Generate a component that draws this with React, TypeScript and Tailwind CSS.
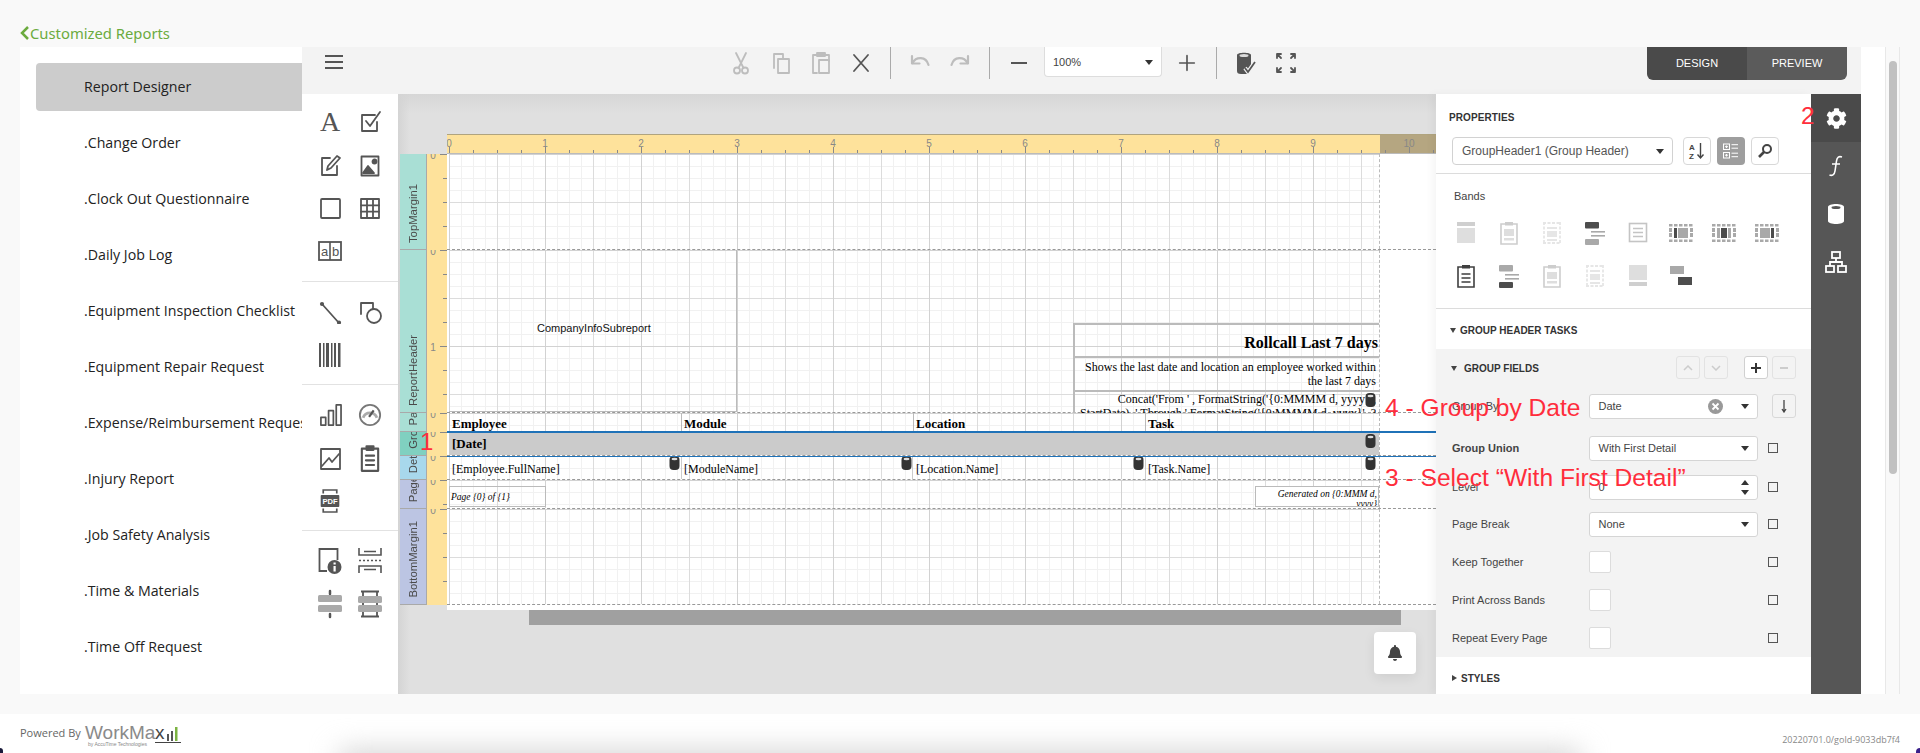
import React from "react";
import { FaBell, FaCog } from "react-icons/fa";

const serif = "[font-family:'Liberation_Serif',serif]";
const grid =
  "bg-[linear-gradient(to_right,#d2d2d2_1px,transparent_1px),linear-gradient(to_bottom,#d2d2d2_1px,transparent_1px),linear-gradient(to_right,#dcdcdc_1px,transparent_1px),linear-gradient(to_bottom,#dcdcdc_1px,transparent_1px),linear-gradient(to_right,#f1f1f1_1px,transparent_1px),linear-gradient(to_bottom,#f1f1f1_1px,transparent_1px)] bg-[size:96px_96px,96px_96px,48px_48px,48px_48px,12px_12px,12px_12px]";

const Ic = ({ s = 24, children, c = "#555" }: { s?: number; children: React.ReactNode; c?: string }) => (
  <svg width={s} height={s} viewBox="0 0 24 24" fill="none" stroke={c} strokeWidth={1.8} strokeLinecap="round" strokeLinejoin="round">
    {children}
  </svg>
);

const menu = [
  "Report Designer",
  ".Change Order",
  ".Clock Out Questionnaire",
  ".Daily Job Log",
  ".Equipment Inspection Checklist",
  ".Equipment Repair Request",
  ".Expense/Reimbursement Request",
  ".Injury Report",
  ".Job Safety Analysis",
  ".Time & Materials",
  ".Time Off Request",
];

function Sidebar() {
  return (
    <div className="w-[282px] shrink-0 bg-white pl-4 pt-4">
      {menu.map((m, i) => (
        <div
          key={m}
          className={`h-12 mb-2 flex items-center pl-12 pb-px text-[14.2px] text-[#222] whitespace-nowrap overflow-hidden [font-family:'Open_Sans',sans-serif] ${
            i === 0 ? "bg-[#cccccc] rounded-l" : ""
          }`}
        >
          {m}
        </div>
      ))}
    </div>
  );
}

const TBtn = ({ children }: { children: React.ReactNode }) => (
  <div className="w-10 h-8 flex items-center justify-center shrink-0">{children}</div>
);
const TSep = () => <div className="w-px h-8 bg-[#aaa] shrink-0 mx-[9px]" />;

function Toolbar() {
  const off = "#bdbdbd";
  return (
    <div className="h-[47px] shrink-0 bg-[#f3f3f3] flex items-start">
      <div className="w-[18px] ml-[23px] mt-2 h-[14px] flex flex-col justify-between shrink-0">
        <div className="h-[2px] bg-[#555]" />
        <div className="h-[2px] bg-[#555]" />
        <div className="h-[2px] bg-[#555]" />
      </div>
      <div className="ml-[378px] flex items-start">
        <TBtn>
          <Ic c={off}>
            <circle cx="8" cy="19.5" r="3" />
            <circle cx="16" cy="19.5" r="3" />
            <path d="M9.5 17 17 2M14.5 17 7 2" />
          </Ic>
        </TBtn>
        <TBtn>
          <Ic c={off}>
            <rect x="9" y="8" width="11" height="14" />
            <path d="M9 3H5v14" />
            <path d="M9 3h5v4" />
          </Ic>
        </TBtn>
        <TBtn>
          <Ic c={off}>
            <path d="M8 4H4v18h4M16 4h4v6" />
            <rect x="8" y="2" width="8" height="3" fill={off} />
            <rect x="10" y="9" width="10" height="13" />
          </Ic>
        </TBtn>
        <TBtn>
          <Ic>
            <path d="m5 4 14 16M19 4 5 20" />
          </Ic>
        </TBtn>
        <TSep />
        <TBtn>
          <Ic c={off}>
            <path d="M4 5v7.500h7.500" strokeWidth={2.2} />
            <path d="M4.500 12C8 5.500 18 5 20.500 14" strokeWidth={2.2} />
          </Ic>
        </TBtn>
        <TBtn>
          <Ic c={off}>
            <path d="M20 5v7.500h-7.500" strokeWidth={2.2} />
            <path d="M19.500 12C16 5.500 6 5 3.500 14" strokeWidth={2.2} />
          </Ic>
        </TBtn>
        <TSep />
        <TBtn>
          <div className="w-4 h-[2.5px] bg-[#555]" />
        </TBtn>
        <div className="w-[118px] h-[30px] ml-[5px] mr-[5px] bg-white border border-[#ddd] border-t-0 rounded-b flex items-center justify-between pl-2 pr-[6px] pt-[2px] text-[11px] text-[#444] shrink-0">
          <span>100%</span>
          <div className="w-0 h-0 border-x-[4px] border-x-transparent border-t-[5px] border-t-[#333] mr-[2px]" />
        </div>
        <TBtn>
          <Ic s={22}>
            <path d="M12 4v16M4 12h16" />
          </Ic>
        </TBtn>
        <TSep />
        <TBtn>
          <svg width="26" height="26" viewBox="0 0 26 26">
            <path d="M4 5c0-3 14-3 14 0v14l-4 5H8c-3 0-4-1-4-3z" fill="#555" />
            <ellipse cx="11" cy="5.500" rx="4.500" ry="1.500" fill="#ddd" />
            <path d="m12 18 3 4 7-10" fill="none" stroke="#f3f3f3" strokeWidth="4" />
            <path d="m12 18 3 4 7-10" fill="none" stroke="#555" strokeWidth="1.8" />
          </svg>
        </TBtn>
        <TBtn>
          <Ic s={24}>
            <path d="M3 3h4M3 3v4M3 3l4 4M21 3h-4M21 3v4M21 3l-4 4M3 21h4M3 21v-4M3 21l4-4M21 21h-4M21 21v-4M21 21l-4-4" strokeWidth={1.8} />
          </Ic>
        </TBtn>
      </div>
      <div className="ml-auto mr-[14px] w-[200px] h-[33px] rounded-b-md overflow-hidden flex text-[11px] text-white shrink-0">
        <div className="w-[100px] bg-[#4a4a4a] flex items-center justify-center">DESIGN</div>
        <div className="w-[100px] bg-[#5b5b5b] flex items-center justify-center">PREVIEW</div>
      </div>
    </div>
  );
}

const TI = ({ children }: { children?: React.ReactNode }) => (
  <div className="w-10 h-[43px] flex items-center justify-center">{children}</div>
);

function Toolbox() {
  const g = "grid grid-cols-[40px_40px] content-start pl-2 border-b border-[#e2e2e2]";
  return (
    <div className="w-24 shrink-0 bg-white">
      <div className={`${g} pt-[6px] h-[188px]`}>
        <TI>
          <span className={`${serif} text-[28px] leading-none text-[#555]`}>A</span>
        </TI>
        <TI>
          <Ic s={24}>
            <path d="M19 12v9H4V5h13" />
            <path d="m8 11 4 5L22 2" />
          </Ic>
        </TI>
        <TI>
          <Ic s={24}>
            <path d="M12 5H4v17h15v-9" />
            <path d="M9 17l1-4L19 3l3 2-9 10z" />
          </Ic>
        </TI>
        <TI>
          <Ic s={24}>
            <rect x="3.5" y="3.5" width="17" height="19" />
            <path d="M5 20l5-7 6 7z" fill="#555" />
            <circle cx="16.5" cy="8.5" r="2" fill="#555" />
          </Ic>
        </TI>
        <TI>
          <Ic s={24}>
            <rect x="3" y="3" width="19" height="19" rx="1" />
          </Ic>
        </TI>
        <TI>
          <Ic s={24}>
            <rect x="3" y="3" width="18" height="19" />
            <path d="M9 3v19M15 3v19M3 9.3h18M3 15.6h18" />
          </Ic>
        </TI>
        <TI>
          <svg width="26" height="26" viewBox="0 0 26 26">
            <rect x="2" y="4" width="22" height="18" fill="none" stroke="#555" strokeWidth="1.8" />
            <path d="M13 4v18" stroke="#555" strokeWidth="1.6" />
            <text x="7.5" y="18" fontSize="13" textAnchor="middle" fill="#555" fontFamily="Liberation Sans">a</text>
            <text x="18.5" y="18" fontSize="13" textAnchor="middle" fill="#555" fontFamily="Liberation Sans">b</text>
          </svg>
        </TI>
      </div>
      <div className={`${g} pt-2 h-[103px]`}>
        <TI>
          <Ic s={24}>
            <path d="m4 4 17 19" />
            <circle cx="4" cy="4" r="1.2" fill="#555" />
            <circle cx="21" cy="22.5" r="1.2" fill="#555" />
          </Ic>
        </TI>
        <TI>
          <Ic s={24}>
            <path d="M3 14V3h12v6" />
            <circle cx="16" cy="16" r="7" />
          </Ic>
        </TI>
        <TI>
          <svg width="24" height="26" viewBox="0 0 24 26" fill="#555">
            <rect x="1" y="1" width="2" height="24" />
            <rect x="5" y="1" width="1.5" height="24" />
            <rect x="8" y="1" width="3" height="24" />
            <rect x="13" y="1" width="1.5" height="24" />
            <rect x="16" y="1" width="2" height="24" />
            <rect x="20" y="1" width="2.5" height="24" />
          </svg>
        </TI>
      </div>
      <div className={`${g} pt-2 h-[146px]`}>
        <TI>
          <Ic s={23}>
            <rect x="2" y="15" width="5" height="8" />
            <rect x="10" y="8" width="5" height="15" />
            <rect x="18" y="2" width="5" height="21" />
          </Ic>
        </TI>
        <TI>
          <svg width="24" height="24" viewBox="0 0 26 26" fill="none" stroke="#777">
            <circle cx="13" cy="13" r="11" strokeWidth="2" />
            <path d="M5.500 16a8 8 0 0 1 15 0" strokeWidth="3" stroke="#aaa" />
            <path d="m12 15 5-7" strokeWidth="2.4" stroke="#555" />
          </svg>
        </TI>
        <TI>
          <Ic s={24}>
            <rect x="3" y="3" width="19" height="20" />
            <path d="m4 20 7-8 3 4 7-8" />
          </Ic>
        </TI>
        <TI>
          <Ic s={28}>
            <path d="M8 4H5v19h14V4h-3" />
            <rect x="9" y="2" width="6" height="3" fill="#555" />
            <path d="M8.500 10h7M8.500 14h7M8.500 18h7" />
          </Ic>
        </TI>
        <TI>
          <svg width="22" height="26" viewBox="0 0 26 30">
            <path d="M5 6V2h16v4M5 24v4h16v-4" fill="none" stroke="#555" strokeWidth="2" />
            <rect x="2" y="8" width="22" height="14" rx="1" fill="#555" />
            <text x="13" y="18.500" fontSize="9" fontWeight="700" textAnchor="middle" fill="#fff" fontFamily="Liberation Sans">PDF</text>
          </svg>
        </TI>
      </div>
      <div className="grid grid-cols-[40px_40px] content-start pl-2 pt-2">
        <TI>
          <svg width="26" height="28" viewBox="0 0 26 28">
            <path d="M10 24H2.500V2h18v11" fill="none" stroke="#555" strokeWidth="1.8" />
            <circle cx="17.500" cy="20" r="7" fill="#555" />
            <rect x="16.500" y="19" width="2.200" height="5.500" fill="#fff" />
            <rect x="16.500" y="15.500" width="2.200" height="2" fill="#fff" />
          </svg>
        </TI>
        <TI>
          <svg width="24" height="27" viewBox="0 0 24 27" fill="none" stroke="#555" strokeWidth="1.6">
            <path d="M1 1v7h22V1M6 4.500h12M1 26v-7h22v7M6 22.500h12" />
            <path d="M1 13.500h22" strokeDasharray="2 2" />
          </svg>
        </TI>
        <TI>
          <svg width="26" height="30" viewBox="0 0 26 30">
            <path d="M13 2v3M13 25v3" stroke="#555" strokeWidth="2.500" strokeLinecap="round" />
            <rect x="1" y="6" width="24" height="7" rx="1.500" fill="#aaa" />
            <rect x="1" y="16" width="24" height="7" rx="1.500" fill="#aaa" />
          </svg>
        </TI>
        <TI>
          <svg width="26" height="30" viewBox="0 0 26 30">
            <path d="M6 2v26M20 2v26M4 2.500h18M4 27.500h18" stroke="#555" strokeWidth="1.800" />
            <rect x="1" y="7" width="24" height="7" rx="1.500" fill="#aaa" />
            <rect x="1" y="16" width="24" height="7" rx="1.500" fill="#aaa" />
          </svg>
        </TI>
      </div>
    </div>
  );
}

function TopRuler() {
  const ticks = Array.from({ length: 42 }, (_, i) => i * 24 + 2);
  return (
    <svg width="989" height="20" className="block">
      <rect width="933" height="20" fill="#fee29b" />
      <rect x="933" width="56" height="20" fill="#b5a681" />
      <rect width="989" height="1" fill="#b0a47f" />
      <rect y="19" width="989" height="1" fill="#bbb" />
      {ticks.map((x, i) => (
        <rect key={x} x={x} y={i % 4 === 0 ? 13 : 16} width="1" height={i % 4 === 0 ? 6 : 3} fill="#888" />
      ))}
      {Array.from({ length: 11 }, (_, i) => (
        <text key={i} x={i * 96 + 2} y="12.500" fontSize="10" fill="#888" textAnchor="middle" fontFamily="Liberation Sans">
          {i}
        </text>
      ))}
    </svg>
  );
}

const Db = ({ cls }: { cls: string }) => (
  <svg width="11" height="14" viewBox="0 0 11 14" className={`absolute ${cls}`}>
    <rect x="0.500" y="0" width="10" height="14" rx="4" fill="#333" />
    <ellipse cx="5.500" cy="3" rx="3" ry="1.200" fill="#ddd" />
  </svg>
);

function Band({
  h,
  label,
  color,
  children,
  selected,
}: {
  h: number;
  label: string;
  color: string;
  children?: React.ReactNode;
  selected?: boolean;
}) {
  const ticks = [];
  for (let y = 0; y < h; y += 24) ticks.push(y);
  return (
    <div className={`flex relative ${selected ? "z-[1]" : ""}`} style={{ height: h }}>
      <div className={`w-[27px] ml-[2px] shrink-0 relative overflow-hidden border-b border-r border-[#a9a9a9] ${color}`}>
        <span className="absolute bottom-[6px] left-[6px] text-[11.3px] leading-[14px] text-[#4a4a4a] whitespace-nowrap [writing-mode:vertical-rl] rotate-180">
          {label}
        </span>
      </div>
      <svg width="20" height={h} className="shrink-0 block bg-[#fee29b] overflow-hidden">
        {ticks.map((y, i) => (
          <rect key={y} x={i % 4 === 0 ? 13 : 16} y={y} width={i % 4 === 0 ? 7 : 4} height="1" fill="#888" />
        ))}
        {ticks
          .filter((_, i) => i % 4 === 0)
          .map((y, i) => (
            <text key={y} x="6" y={y + 5} fontSize="10" fill="#888" textAnchor="middle" fontFamily="Liberation Sans">
              {i === 0 ? "0" : i}
            </text>
          ))}
      </svg>
      <div className="flex-1 bg-white border-b border-dashed border-[#999]">
        <div className={`relative ml-[2px] w-[931px] h-full border-r border-dashed border-[#bbb] ${grid}`}>{children}</div>
      </div>
      {selected && (
        <>
          <div className="absolute left-[49px] right-0 -top-px h-[1.500px] bg-[#1f72b8]" />
          <div className="absolute left-[49px] right-0 -bottom-px h-[1.500px] bg-[#1f72b8]" />
        </>
      )}
    </div>
  );
}

const Head = ({ left, children }: { left: string; children: string }) => (
  <div className={`absolute top-0 h-full border-l border-[#bbb] pl-[2px] ${left} ${serif} text-[13px] font-bold text-black leading-[19px] pt-[1px]`}>
    {children}
  </div>
);
const Cell = ({ left, children }: { left: string; children: string }) => (
  <div className={`absolute top-0 h-full ${left} ${serif} text-[12px] text-black leading-[27px] pl-[3px] whitespace-nowrap`}>{children}</div>
);

function Surface() {
  return (
    <div className="w-[1038px] shrink-0 relative bg-[#e0e0e0] bg-[linear-gradient(to_bottom,#d6d6d6,#e0e0e0_20px)] pt-10">
      <div className="absolute left-0 top-0 bottom-0 w-3 bg-gradient-to-r from-[#d4d4d4] to-transparent" />
      <div className="ml-[49px] relative">
        <TopRuler />
      </div>
      <Band h={96} label="TopMargin1" color="bg-[#a9dfd5]" />
      <Band h={163} label="ReportHeader" color="bg-[#a9dfd5]">
        <div className="absolute left-0 top-0 w-[288px] h-full border-r border-b border-[#bbb]">
          <div className="absolute left-[88px] top-[70px] text-[11px] text-[#111] whitespace-nowrap">CompanyInfoSubreport</div>
        </div>
        <div className={`absolute left-[624px] top-[73px] w-[306px] ${serif} text-right text-black`}>
          <div className="h-[33px] border-2 border-[#bbb] border-r-0 border-b-0 pt-[8px] pr-[1px] text-[16px] font-bold leading-[20px] whitespace-nowrap">Rollcall Last 7 days</div>
          <div className="h-[34px] border-l-2 border-t-2 border-[#bbb] text-[12px] leading-[14px] pr-[3px] pt-[2px]">
            <div className="whitespace-nowrap">Shows the last date and location an employee worked within</div>
            <div>the last 7 days</div>
          </div>
          <div className="h-[23px] overflow-hidden border-l-2 border-t-2 border-[#bbb] text-[12px] leading-[14px] pr-[3px]">
            <div className="whitespace-nowrap">Concat('From ' , FormatString('{"{"}0:MMMM d, yyyy{"}"}',</div>
            <div className="whitespace-nowrap">StartDate) ,' Through ',FormatString('{"{"}0:MMMM d, yyyy{"}"}', ?</div>
          </div>
        </div>
        <Db cls="left-[916px] top-[143px]" />
      </Band>
      <Band h={19} label="PageHeader" color="bg-[#a9dfd5]">
        <Head left="left-0">Employee</Head>
        <Head left="left-[232px]">Module</Head>
        <Head left="left-[464px]">Location</Head>
        <Head left="left-[696px]">Task</Head>
      </Band>
      <Band h={24} label="GroupHeader1" color="bg-[#80d0c0]" selected>
        <div className={`absolute inset-x-0 top-0 h-full bg-[#cbcbcb] ${serif} text-[13px] font-bold text-black leading-[24px] pl-[3px]`}>[Date]</div>
        <Db cls="left-[916px] top-[2px]" />
      </Band>
      <Band h={24} label="Detail1" color="bg-[#a8d8ec]">
        <Cell left="left-0">[Employee.FullName]</Cell>
        <Cell left="left-[232px]">[ModuleName]</Cell>
        <Cell left="left-[464px]">[Location.Name]</Cell>
        <Cell left="left-[696px]">[Task.Name]</Cell>
        <div className="absolute left-[232px] top-0 h-full w-px bg-[#ccc]" />
        <div className="absolute left-[463px] top-0 h-full w-px bg-[#ccc]" />
        <div className="absolute left-[696px] top-0 h-full w-px bg-[#ccc]" />
        <Db cls="left-[220px] top-0" />
        <Db cls="left-[452px] top-0" />
        <Db cls="left-[684px] top-0" />
        <Db cls="left-[916px] top-0" />
      </Band>
      <Band h={29} label="PageFooter1" color="bg-[#bcc5e3]">
        <div className={`absolute left-0 top-[6px] w-[97px] h-[21px] border border-[#bbb] ${serif} italic text-[9.500px] text-black leading-[20px] pl-[1px]`}>
          Page {"{0}"} of {"{1}"}
        </div>
        <div className={`absolute left-[806px] top-[6px] w-[124px] h-[21px] border border-[#bbb] ${serif} italic text-[9.500px] text-black leading-[10px] text-right pr-[1px] pt-[2px] bg-white overflow-hidden`}>
          Generated on {"{0:MMM d,"}
          <br />
          {"yyyy}"}
        </div>
      </Band>
      <Band h={96} label="BottomMargin1" color="bg-[#bcc5e3]" />
      <div className="ml-[49px] h-[5px] bg-white" />
      <div className="ml-[131px] w-[872px] h-[15px] bg-[#a0a0a0]" />
      <div className="absolute left-[976px] top-[538px] w-[42px] h-[42px] bg-white rounded flex items-center justify-center shadow-[0_4px_12px_rgba(0,0,0,0.08)]">
        <FaBell size={16} color="#444" />
      </div>
    </div>
  );
}

const D = "#4d4d4d";
const L = "#dedede";
const M = "#a9a9a9";
const Clip = ({ c, lines, fill }: { c: string; lines?: boolean; fill?: string }) => (
  <svg width="20" height="24" viewBox="0 0 20 24" fill="none">
    <path d="M6 3H2v20h16V3h-4" stroke={c} strokeWidth="1.600" />
    <rect x="6" y="1" width="8" height="3.500" fill={c} />
    {lines && <path d="M5.500 10h9M5.500 14h9M5.500 18h9" stroke={c} strokeWidth="1.600" />}
    {fill && <rect x="5" y="8" width="10" height="7" fill={fill} />}
    {fill && <rect x="5" y="17" width="10" height="2.500" fill={fill} />}
  </svg>
);
const DashBox = ({ c }: { c: string }) => (
  <svg width="20" height="24" viewBox="0 0 20 24" fill="none">
    <path d="M2 1v22M18 1v22M1 2h18M1 22h18" stroke={c} strokeWidth="1.800" strokeDasharray="3 1.500" />
    <rect x="5" y="6" width="10" height="2" fill={c} />
    <rect x="5" y="10" width="10" height="6" fill={c} />
    <rect x="5" y="18" width="10" height="2" fill={c} />
  </svg>
);
const Wide = ({ v }: { v: number }) => (
  <svg width="24" height="18" viewBox="0 0 24 18">
    <path d="M0 1.200h24M0 16.800h24" stroke={M} strokeWidth="2.400" strokeDasharray="3.500 1.500" fill="none" />
    <path d="M1.500 4v10M22.500 4v10" stroke={M} strokeWidth="3" strokeDasharray="4 1" fill="none" />
    {v === 0 && (
      <>
        <rect x="5" y="4" width="3" height="10" fill={D} />
        <rect x="9" y="4" width="10" height="10" fill={M} />
      </>
    )}
    {v === 1 && (
      <>
        <rect x="5" y="4" width="3" height="10" fill={M} />
        <rect x="9" y="4" width="6" height="10" fill={D} />
        <rect x="16" y="4" width="3" height="10" fill={M} />
      </>
    )}
    {v === 2 && (
      <>
        <rect x="5" y="4" width="10" height="10" fill={M} />
        <rect x="16" y="4" width="3" height="10" fill={D} />
      </>
    )}
  </svg>
);
const Tree = ({ a, b }: { a: string; b: string }) => (
  <svg width="22" height="24" viewBox="0 0 22 24">
    <rect x="1" y="1" width="14" height="6.500" rx="1" fill={a} />
    <rect x="7" y="10" width="14" height="1.600" fill={M} />
    <rect x="7" y="14" width="14" height="1.600" fill={M} />
    <rect x="1" y="18" width="14" height="6" rx="1" fill={b} />
  </svg>
);

const bandIcons: React.ReactNode[] = [
  <svg width="20" height="22" viewBox="0 0 20 22"><rect x="1" y="0" width="18" height="4" fill="#cfcfcf" /><rect x="1" y="6" width="18" height="15" fill={L} /></svg>,
  <Clip c="#cdcdcd" fill={L} />,
  <DashBox c="#e6e6e6" />,
  <Tree a={D} b={M} />,
  <svg width="20" height="22" viewBox="0 0 20 22" fill="none"><rect x="1.500" y="1.500" width="17" height="18" stroke="#c4c4c4" strokeWidth="1.600" /><path d="M5 6.500h10M5 10.500h10M5 14.500h10" stroke="#c4c4c4" strokeWidth="1.600" /></svg>,
  <Wide v={0} />,
  <Wide v={1} />,
  <Wide v={2} />,
  <Clip c="#3f3f3f" lines />,
  <Tree a={M} b={D} />,
  <Clip c="#cdcdcd" fill={L} />,
  <DashBox c="#e6e6e6" />,
  <svg width="20" height="22" viewBox="0 0 20 22"><rect x="1" y="0" width="18" height="15" fill={L} /><rect x="1" y="17" width="18" height="4" fill="#cfcfcf" /></svg>,
  <svg width="24" height="20" viewBox="0 0 24 20"><rect x="1" y="0" width="14" height="8" fill={M} /><rect x="9" y="11" width="14" height="8" fill={D} /></svg>,
];

const Caret = () => <div className="w-0 h-0 border-x-[4px] border-x-transparent border-t-[5px] border-t-[#333]" />;
const Sq = () => <div className="w-[10px] h-[10px] border border-[#555] ml-[10px] shrink-0 bg-[#f3f3f3]" />;
const Inp = ({ children }: { children: React.ReactNode }) => (
  <div className="w-[169px] h-[25px] bg-white border border-[#d5d5d5] rounded-[3px] flex items-center justify-between pl-[9px] pr-2 text-[11px] text-[#444] shrink-0">
    {children}
  </div>
);
const Row = ({ label, h = "h-[38px]", bold, children }: { label: string; h?: string; bold?: boolean; children: React.ReactNode }) => (
  <div className={`${h} flex items-center pl-4`}>
    <div className={`w-[136.500px] text-[11px] shrink-0 text-[#444] ${bold ? "font-bold" : ""}`}>{label}</div>
    {children}
  </div>
);
const Check = () => <div className="w-[22px] h-[22px] bg-white border border-[#dcdcdc] rounded-[2px] mr-[147px] shrink-0" />;
const SmallBtn = ({ children, cls }: { children: React.ReactNode; cls?: string }) => (
  <div className={`w-[24px] h-[23px] rounded-[3px] border flex items-center justify-center ${cls}`}>{children}</div>
);
const Tri = ({ down }: { down?: boolean }) =>
  down ? (
    <div className="w-0 h-0 border-x-[3.500px] border-x-transparent border-t-[5px] border-t-[#444] shrink-0" />
  ) : (
    <div className="w-0 h-0 border-y-[3.500px] border-y-transparent border-l-[5px] border-l-[#444] shrink-0" />
  );

function Props() {
  return (
    <div className="w-[375px] shrink-0 bg-white overflow-hidden text-[#333] shadow-[-4px_0_8px_rgba(0,0,0,0.04)] z-10">
      <div className="h-[43px] pl-[13px] pt-[18px] text-[10px] font-bold leading-[12px] tracking-[0.1px]">PROPERTIES</div>
      <div className="h-[37px] border-b border-[#dcdcdc] flex items-start pl-4">
        <div className="w-[221px] h-7 border border-[#d2d2d2] rounded flex items-center justify-between pl-[9px] pr-[8px] text-[12px] text-[#555] shrink-0 whitespace-nowrap">
          <span>GroupHeader1 (Group Header)</span>
          <Caret />
        </div>
        <div className="w-[28px] h-7 ml-[10px] border border-[#d8d8d8] rounded flex items-center justify-center shrink-0">
          <svg width="18" height="18" viewBox="0 0 18 18">
            <text x="1" y="8" fontSize="8" fontWeight="700" fill="#444" fontFamily="Liberation Sans">A</text>
            <text x="1" y="16.500" fontSize="8" fontWeight="700" fill="#444" fontFamily="Liberation Sans">Z</text>
            <path d="M12.500 1v15M9.500 12.500l3 3.500 3-3.500" fill="none" stroke="#444" strokeWidth="1.400" />
          </svg>
        </div>
        <div className="w-[28px] h-7 ml-[6px] bg-[#9e9e9e] rounded flex items-center justify-center shrink-0">
          <svg width="16" height="16" viewBox="0 0 16 16" fill="none" stroke="#fff" strokeWidth="1">
            <rect x="0.500" y="1" width="6" height="5.500" />
            <rect x="0.500" y="9.500" width="6" height="5.500" />
            <path d="M2 3.700h3M3.500 2.500v2.500M2 12.200h3M3.500 11v2.500M8.500 1.700H15M8.500 5.200H15M8.500 10.200H15M8.500 13.700H15" />
          </svg>
        </div>
        <div className="w-[28px] h-7 ml-[6px] border border-[#d8d8d8] rounded flex items-center justify-center shrink-0">
          <svg width="16" height="16" viewBox="0 0 16 16" fill="none" stroke="#444">
            <circle cx="10" cy="6" r="4" strokeWidth="2" />
            <path d="m7 9-5 5" strokeWidth="2.600" />
          </svg>
        </div>
      </div>
      <div className="h-[135px] border-b border-[#dcdcdc]">
        <div className="h-[37px] pl-[18px] pt-[15px] text-[11px] leading-[14px] text-[#444]">Bands</div>
        <div className="grid grid-cols-[repeat(8,43px)] grid-rows-[43px_43px] pl-[8.500px]">
          {bandIcons.map((ic, i) => (
            <div key={i} className="flex items-center justify-center">
              {ic}
            </div>
          ))}
        </div>
      </div>
      <div className="h-[40px] flex items-center pl-[14px] pt-[2px] gap-[4px] text-[10px] font-bold">
        <Tri down />
        <span>GROUP HEADER TASKS</span>
      </div>
      <div className="bg-[#f3f3f3] h-[308px]">
        <div className="h-[36px] flex items-start pl-[15px] pt-[7px]">
          <div className="flex items-center gap-[7px] h-[23px] pt-[1px] text-[10px] font-bold w-[225px]">
            <Tri down />
            <span>GROUP FIELDS</span>
          </div>
          <SmallBtn cls="border-[#e2e2e2]">
            <svg width="10" height="6" viewBox="0 0 10 6" fill="none" stroke="#ccc" strokeWidth="1.500"><path d="m1 5 4-4 4 4" /></svg>
          </SmallBtn>
          <div className="ml-[4px]">
            <SmallBtn cls="border-[#e2e2e2]">
              <svg width="10" height="6" viewBox="0 0 10 6" fill="none" stroke="#ccc" strokeWidth="1.500"><path d="m1 1 4 4 4-4" /></svg>
            </SmallBtn>
          </div>
          <div className="ml-[16px]">
            <SmallBtn cls="border-[#d0d0d0] bg-white">
              <svg width="12" height="12" viewBox="0 0 12 12" stroke="#333" strokeWidth="2"><path d="M6 1v10M1 6h10" /></svg>
            </SmallBtn>
          </div>
          <div className="ml-[4px]">
            <SmallBtn cls="border-[#e2e2e2]">
              <div className="w-[8px] h-[2px] bg-[#ccc]" />
            </SmallBtn>
          </div>
        </div>
        <Row label="Group By" h="h-[42px]">
          <Inp>
            <span>Date</span>
            <span className="flex items-center gap-[18px]">
              <svg width="15" height="15" viewBox="0 0 15 15">
                <circle cx="7.500" cy="7.500" r="7.500" fill="#999" />
                <path d="m4.500 4.500 6 6M10.500 4.500l-6 6" stroke="#fff" strokeWidth="1.800" />
              </svg>
              <Caret />
            </span>
          </Inp>
          <div className="w-[24px] h-[24px] ml-[14.500px] border border-[#d8d8d8] rounded-[3px] flex items-center justify-center shrink-0">
            <svg width="8" height="14" viewBox="0 0 8 14" fill="none" stroke="#444" strokeWidth="1.300"><path d="M4 1v11M2 10l2 3 2-3" /></svg>
          </div>
        </Row>
        <Row label="Group Union" h="h-[42px]" bold>
          <Inp>
            <span>With First Detail</span>
            <Caret />
          </Inp>
          <Sq />
        </Row>
        <Row label="Level" h="h-[36px]">
          <Inp>
            <span>0</span>
            <span className="flex flex-col gap-[5px]">
              <div className="w-0 h-0 border-x-[4px] border-x-transparent border-b-[5px] border-b-[#333]" />
              <Caret />
            </span>
          </Inp>
          <Sq />
        </Row>
        <Row label="Page Break">
          <Inp>
            <span>None</span>
            <Caret />
          </Inp>
          <Sq />
        </Row>
        <Row label="Keep Together">
          <Check />
          <Sq />
        </Row>
        <Row label="Print Across Bands">
          <Check />
          <Sq />
        </Row>
        <Row label="Repeat Every Page">
          <Check />
          <Sq />
        </Row>
      </div>
      <div className="h-[36px] flex items-center pl-4 pt-[6px] gap-[4px] text-[10px] font-bold">
        <Tri />
        <span>STYLES</span>
      </div>
    </div>
  );
}

function Tabs() {
  return (
    <div className="w-[50px] shrink-0 bg-[#565656] flex flex-col">
      <div className="h-12 bg-[#4a4a4a] flex items-center justify-center">
        <FaCog size={21} color="#fff" />
      </div>
      <div className="h-[47px] flex items-center justify-center">
        <svg width="16" height="22" viewBox="0 0 16 22" fill="none" stroke="#fff" strokeWidth="1.600">
          <path d="M14 2c-3-1-5 0-5.500 4L7 16c-.5 4-3 5-5.500 4M4 9h8" />
        </svg>
      </div>
      <div className="h-[49px] flex items-center justify-center">
        <svg width="16" height="20" viewBox="0 0 16 20">
          <path d="M0 3c0-4 16-4 16 0v14c0 4-16 4-16 0z" fill="#fff" />
          <ellipse cx="8" cy="3.500" rx="4.500" ry="1.500" fill="#555" />
        </svg>
      </div>
      <div className="h-[48px] flex items-center justify-center">
        <svg width="22" height="22" viewBox="0 0 22 22" fill="none" stroke="#fff" strokeWidth="1.800">
          <rect x="7" y="1" width="8" height="6" />
          <rect x="1" y="15" width="8" height="6" />
          <rect x="13" y="15" width="8" height="6" />
          <path d="M11 7v4M5 15v-4h12v4" />
        </svg>
      </div>
    </div>
  );
}

export default function App() {
  return (
    <div className="relative w-[1920px] h-[753px] overflow-hidden bg-[#f9f9f9] flex flex-col [font-family:'Liberation_Sans',sans-serif]">
      <div className="h-[47px] shrink-0 pl-5 pt-[22px] flex items-start text-[#6bab3e] text-[14.800px] leading-[22px] [font-family:'Noto_Sans',sans-serif]">
        <svg width="10" height="14" viewBox="0 0 10 14" className="mt-1" fill="none" stroke="#6bab3e" strokeWidth="2.500">
          <path d="M8 1 2 7l6 6" />
        </svg>
        <span>Customized Reports</span>
      </div>

      <div className="h-[647px] shrink-0 ml-5 flex">
        <Sidebar />
        <div className="w-[1559px] shrink-0 flex flex-col overflow-hidden">
          <Toolbar />
          <div className="flex flex-1 min-h-0">
            <Toolbox />
            <Surface />
            <Props />
            <Tabs />
          </div>
        </div>
        <div className="w-6 shrink-0 bg-white" />
        <div className="w-[15px] shrink-0 border-x border-[#e8e8e8] pl-[3px] pt-[14px]">
          <div className="w-2 h-[413px] rounded-full bg-[#c1c1c1]" />
        </div>
      </div>

      <div className="h-5 shrink-0" />

      <div className="relative h-[39px] shrink-0 bg-white flex items-start justify-between overflow-hidden">
        <div className="absolute left-[340px] right-[340px] -bottom-[22px] h-[24px] bg-[#cfcfcf] blur-[14px]" />
        <div className="relative flex items-start pl-5">
          <span className="text-[11px] text-[#666] mt-[11px] w-[65px] whitespace-nowrap [font-family:'Open_Sans',sans-serif]">Powered By</span>
          <div className="relative flex items-start h-[24px] mt-[7px]">
            <span className="text-[19px] leading-[24px] text-[#8a8a8a] whitespace-nowrap w-[70px]">WorkMa</span>
            <span className="text-[19px] leading-[24px] h-[22px] w-[26px] text-[#444] border-b-[1.500px] border-[#444] flex items-start">
              <span className="w-[11px]">x</span>
              <svg width="14" height="14" viewBox="0 0 14 14" className="mt-[6px]">
                <rect x="1" y="7" width="2" height="7" fill="#555" />
                <rect x="5" y="4" width="2" height="10" fill="#555" />
                <rect x="9" y="0" width="2.500" height="14" fill="#7cb342" />
              </svg>
            </span>
            <span className="absolute left-[3px] top-[20px] text-[5px] leading-[6px] text-[#888] whitespace-nowrap">by AccuTime Technologies</span>
          </div>
        </div>
        <span className="relative mt-[20px] mr-5 text-[9px] leading-[12px] text-[#888] [font-family:'Open_Sans',sans-serif]">20220701.0/gold-9033db7f4</span>
        <div className="absolute left-0 bottom-0 w-[3px] h-[5px] bg-[#1a1a3a] rounded-tr" />
        <div className="absolute right-0 bottom-0 w-[4px] h-[5px] bg-[#3a1f8a] rounded-tl" />
      </div>

      <div className="absolute z-20 left-[420px] top-[428px] text-[24px] leading-[28px] text-[#ff2d3c]">1</div>
      <div className="absolute z-20 left-[1801px] top-[102px] text-[24px] leading-[28px] text-[#ff2d3c]">2</div>
      <div className="absolute z-20 left-[1385px] top-[464px] text-[24.600px] leading-[28px] text-[#ff2d3c] whitespace-nowrap">3 - Select “With First Detail”</div>
      <div className="absolute z-20 left-[1385px] top-[394px] text-[24.600px] leading-[28px] text-[#ff2d3c] whitespace-nowrap">4 - Group by Date</div>
    </div>
  );
}
